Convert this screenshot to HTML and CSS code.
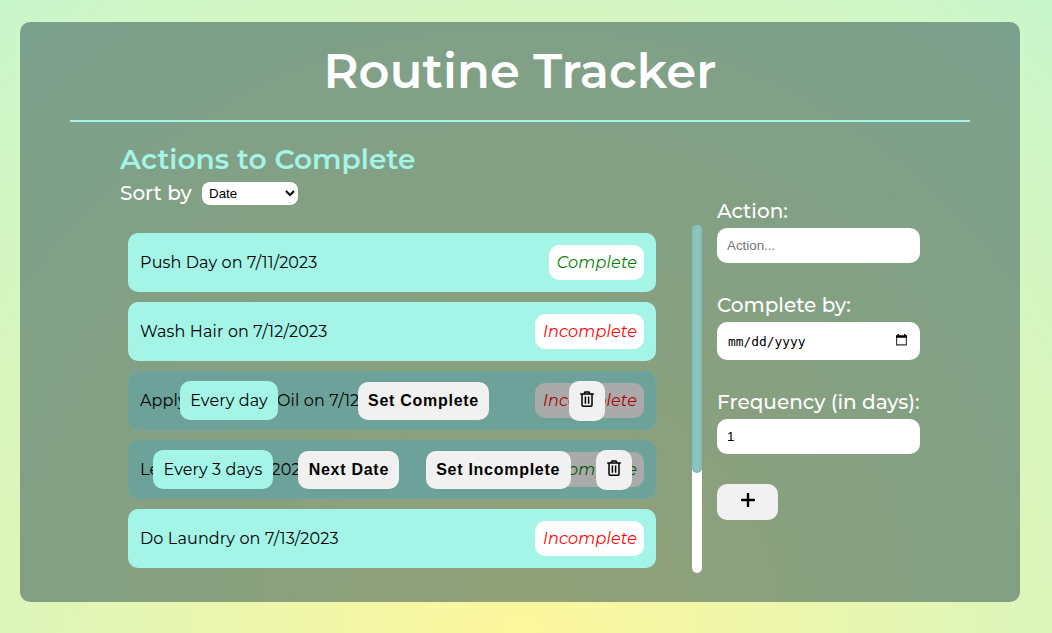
FILE: index.html
```html
<!DOCTYPE html>
<html lang="en">
<head>
<meta charset="utf-8">
<title>Routine Tracker</title>
<link rel="stylesheet" href="styles.css">
</head>
<body>
<svg class="sprite" width="0" height="0">
  <symbol id="trash" viewBox="0 0 14 16">
    <path d="M.2 3h13.6M4 2.8 5 .9h4l1 1.9M2 3v11q0 1.2 1.2 1.2h7.6q1.2 0 1.2-1.2V3M5.4 5.5v7.2M8.6 5.5v7.2" fill="none" stroke="#000" stroke-width="1.5"/>
  </symbol>
</svg>
<main class="panel">
  <h1 class="title">Routine Tracker</h1>
  <div class="content">
    <section class="actions">
      <h2 class="heading">Actions to Complete</h2>
      <div class="sort">
        <label class="sort-label" for="sort">Sort by</label>
        <select class="select" id="sort"><option>Date</option></select>
      </div>
      <div class="list-wrap">
        <ul class="list">
          <li class="item"><span>Push Day on 7/11/2023</span><em class="status done">Complete</em></li>
          <li class="item"><span>Wash Hair on 7/12/2023</span><em class="status">Incomplete</em></li>
          <li class="item">
            <span>Apply Rosemary Oil on 7/12/2023</span><em class="status">Incomplete</em>
            <div class="overlay three">
              <span class="every day">Every day</span>
              <button class="btn set">Set Complete</button>
              <button class="btn trash"><svg width="14" height="16"><use href="#trash"/></svg></button>
            </div>
          </li>
          <li class="item">
            <span>Leg Day on 7/12/2023</span><em class="status done">Complete</em>
            <div class="overlay four">
              <span class="every days">Every 3 days</span>
              <button class="btn next">Next Date</button>
              <button class="btn unset">Set Incomplete</button>
              <button class="btn trash"><svg width="14" height="16"><use href="#trash"/></svg></button>
            </div>
          </li>
          <li class="item"><span>Do Laundry on 7/13/2023</span><em class="status">Incomplete</em></li>
        </ul>
        <div class="track"><div class="thumb"></div></div>
      </div>
    </section>
    <form class="form">
      <label class="label" for="action">Action:</label>
      <input class="field" id="action" placeholder="Action...">
      <div class="label">Complete by:</div>
      <div class="field date"><span>mm/dd/yyyy</span>
        <svg width="11" height="12" viewBox="0 0 11 12"><path d="M.6 2.5h9.8v8.4H.6z" fill="none" stroke="#333" stroke-width="1.1"/><path d="M0 1.2h11v2.6H0zM1.5 0h1.4v2H1.5zM8.1 0h1.4v2H8.1z"/></svg>
      </div>
      <label class="label" for="freq">Frequency (in days):</label>
      <input class="field" id="freq" value="1">
      <button class="btn add" type="button"><svg width="14" height="14" viewBox="0 0 14 14"><path d="M7 1v12M1 7h12" stroke="#000" stroke-width="2.4" stroke-linecap="round"/></svg></button>
    </form>
  </div>
</main>
</body>
</html>
```
FILE: styles.css
```css
* { box-sizing: border-box; }
body {
  margin: 0;
  height: 633px;
  overflow: hidden;
  padding: 22px 32px 31px 20px;
  font: 500 16px/20px Montserrat, Inter, sans-serif;
  background: radial-gradient(circle at 520px 633px, #fdf69c 0, #c9f6cc 820px);
}
.sprite { display: none; }
.panel {
  width: 1000px;
  height: 580px;
  padding: 0 50px;
  border-radius: 10px;
  background: rgba(57, 90, 90, .55);
}
.title {
  height: 100px;
  margin: 0;
  border-bottom: 2px solid #a4f4e8;
  color: #fff;
  text-align: center;
  font-size: 48px;
  font-weight: 600;
  line-height: 98px;
  letter-spacing: .1px;
}
.content { display: flex; padding-left: 50px; }
.actions { width: 582px; padding-top: 20px; }
.heading {
  margin: 0;
  height: 34px;
  color: #a4f4e8;
  font-size: 28px;
  font-weight: 600;
  line-height: 34px;
  letter-spacing: .05px;
  white-space: nowrap;
}
.sort { display: flex; align-items: center; height: 34px; color: #fff; }
.sort-label { width: 82px; font-size: 20px; white-space: nowrap; }
.select {
  width: 96px;
  height: 23px;
  padding: 0 2px 0 3px;
  border: 0;
  border-radius: 8px;
  background: #fff;
  color: #000;
  font: 13.33px "Liberation Sans", sans-serif;
}
.list-wrap { display: flex; justify-content: space-between; margin-top: 15px; height: 348px; }
.list {
  display: flex;
  flex-direction: column;
  gap: 10px;
  width: 544px;
  margin: 0;
  padding: 8px;
  list-style: none;
}
.item {
  position: relative;
  display: flex;
  flex: none;
  align-items: center;
  justify-content: space-between;
  height: 59px;
  padding: 0 12px;
  border-radius: 10px;
  background: #a4f4e8;
  font-weight: 400;
  white-space: nowrap;
  letter-spacing: .14px;
}
.status {
  width: 109px;
  height: 35px;
  padding-left: 1px;
  border-radius: 10px;
  background: #fff;
  color: #f00;
  text-align: center;
  line-height: 35px;
  letter-spacing: .2px;
}
.status.done { width: 95px; color: green; }
.overlay {
  position: absolute;
  inset: 0;
  display: flex;
  align-items: center;
  justify-content: space-between;
  border-radius: 10px;
  background: rgba(0, 0, 0, .335);
}
.three { padding: 0 51px 0 52px; }
.four { padding: 0 24px 0 25px; }
.every {
  height: 39px;
  border-radius: 10px;
  background: #a4f4e8;
  text-align: center;
  line-height: 39px;
}
.day { width: 98px; }
.days { width: 120px; }
.btn {
  height: 38px;
  padding: 0;
  border: 0;
  border-radius: 10px;
  background: #f1f1f1;
  color: #000;
  font: bold 16px "Liberation Sans", sans-serif;
  letter-spacing: .73px;
}
.set { width: 131px; }
.next { width: 101px; margin-right: 1px; }
.unset { width: 145px; }
.trash { width: 36px; height: 40px; padding-bottom: 3px; }
.btn svg { display: block; margin: 0 auto; }
.track { width: 10px; height: 348px; border-radius: 5px; background: #fff; }
.thumb {
  height: 248px;
  border-radius: 5px;
  background: #8cc5bf;
  box-shadow: inset 0 0 3px rgba(70, 150, 145, .5);
}
.form { width: 203px; margin-left: 15px; padding-top: 76px; }
.label { display: block; height: 30px; color: #fff; font-size: 20px; line-height: 26px; white-space: nowrap; }
.field {
  display: block;
  width: 203px;
  height: 35px;
  margin-bottom: 29px;
  padding: 0 10px;
  border: 0;
  border-radius: 10px;
  background: #fff;
  font: 13.33px "Liberation Sans", sans-serif;
}
.date {
  display: flex;
  align-items: center;
  justify-content: space-between;
  height: 38px;
  padding: 0 13px 2px 11px;
  font-family: "DejaVu Sans Mono", monospace;
  font-size: 12.9px;
}
.date span { padding-top: 2px; }
.add { width: 61px; height: 36px; margin-top: 1px; padding-bottom: 4px; }
```
